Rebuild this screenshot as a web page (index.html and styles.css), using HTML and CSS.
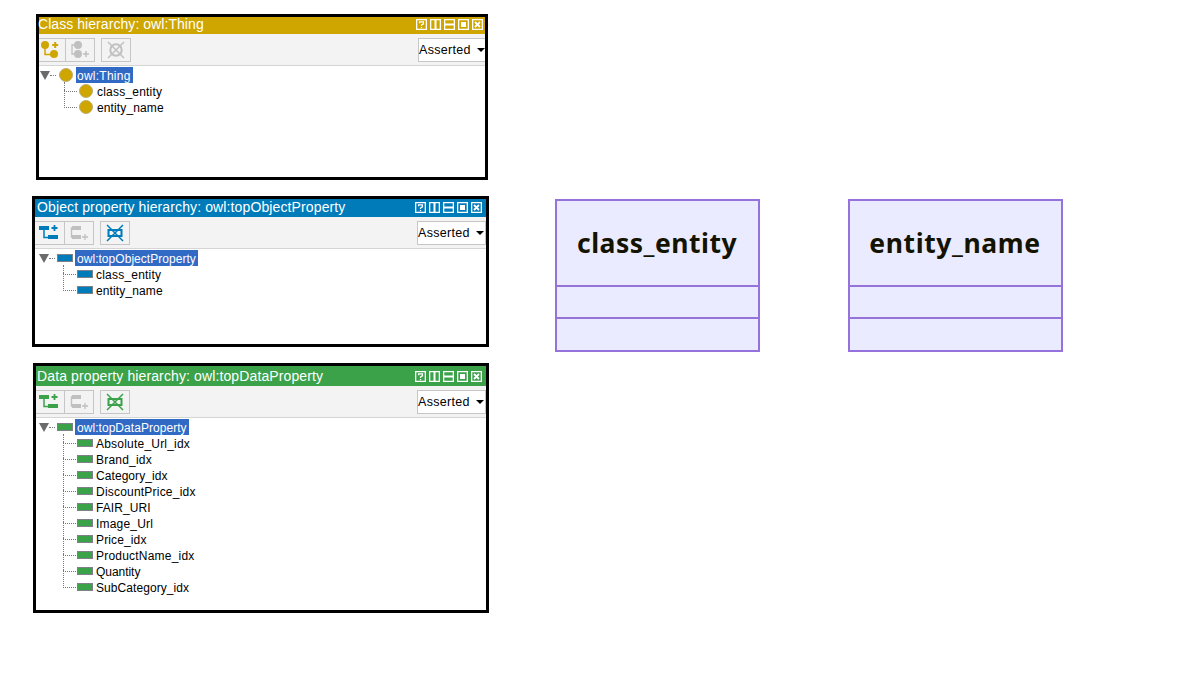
FILE: index.html
```
<!DOCTYPE html>
<html lang="en">
<head>
<meta charset="utf-8">
<title>Ontology hierarchies</title>
<link rel="stylesheet" href="styles.css">
</head>
<body>
<svg class="defs" width="0" height="0">
  <defs>
    <symbol id="win" viewBox="0 0 67 11">
      <g fill="none" stroke="#fff" stroke-width="1.3">
        <path d="M.65.65h9.7v9.7H.65zM14.65.65h9.7v9.7h-9.7zM28.65.65h9.7v9.7h-9.7zM42.65.65h9.7v9.7h-9.7zM56.65.65h9.7v9.7h-9.7z"/>
        <path d="M3.6 4.2V2.8h3.8v2L5.5 6v1M5.5 8v1.3"/>
        <path d="M19.5 1v9M29 5.5h9" stroke-width="2"/>
        <path d="M59 3l5 5M64 3l-5 5" stroke-width="1.8"/>
      </g>
      <path fill="#fff" d="M45 3h5v5h-5z"/>
    </symbol>
    <symbol id="add-child" viewBox="0 0 20 18">
      <path d="M6 6v7.5h5" fill="none" stroke="currentColor" stroke-width="1.5"/>
      <path d="M1 2h10v4H1zM10 11h10v4H10z" fill="currentColor"/>
      <path d="M16.5 1v6M13.5 4h6" stroke="currentColor" stroke-width="1.8"/>
    </symbol>
    <symbol id="add-sib" viewBox="0 0 20 18">
      <path d="M5 4H2.5v9H5" fill="none" stroke="currentColor" stroke-width="1.4"/>
      <path d="M3 2h9v4H3zM3 11h9v4H3z" fill="currentColor"/>
      <path d="M16 10v6M13 13h6" stroke="currentColor" stroke-width="1.3"/>
    </symbol>
    <symbol id="delete" viewBox="0 0 20 18">
      <path d="M3.5 6h13v6h-13z" fill="none" stroke="currentColor" stroke-width="2"/>
      <path d="M2 1l16 16M18 1L2 17" stroke="currentColor" stroke-width="1.5"/>
    </symbol>
    <symbol id="c-add-child" viewBox="0 0 20 18">
      <path d="M5 6v7.5h6" fill="none" stroke="currentColor" stroke-width="1.5"/>
      <circle cx="5" cy="4" r="4" fill="currentColor"/><circle cx="14" cy="13" r="4" fill="currentColor"/>
      <path d="M15.2 1v6M12.2 4h6" stroke="currentColor" stroke-width="2"/>
    </symbol>
    <symbol id="c-add-sib" viewBox="0 0 20 18">
      <path d="M6 4H2v9h4" fill="none" stroke="currentColor" stroke-width="1.3"/>
      <circle cx="8" cy="4" r="4" fill="currentColor"/><circle cx="8" cy="13" r="4" fill="currentColor"/>
      <path d="M16 10v6M13 13h6" stroke="currentColor" stroke-width="1.5"/>
    </symbol>
    <symbol id="c-delete" viewBox="0 0 20 18">
      <circle cx="10" cy="9" r="5.7" fill="none" stroke="currentColor" stroke-width="2"/>
      <path d="M2 1l16 16M18 1L2 17" stroke="currentColor" stroke-width="1.5"/>
    </symbol>
  </defs>
</svg>
<main class="page">
  <div class="panels">
    <section class="panel classes">
      <header class="title"><span class="t1">Class hierarchy: owl:Thing</span><svg class="win"><use href="#win"/></svg></header>
      <div class="toolbar">
        <div class="btn first"><svg class="ico"><use href="#c-add-child"/></svg></div>
        <div class="btn second off"><svg class="ico"><use href="#c-add-sib"/></svg></div>
        <div class="btn third off"><svg class="ico"><use href="#c-delete"/></svg></div>
        <div class="select"><span>Asserted</span><i class="caret"></i></div>
      </div>
      <div class="tree">
        <div class="root"><i class="arrow"></i><i class="dots"></i><i class="mark"></i><span class="sel r1">owl:Thing</span></div>
        <div class="row"><i class="mark"></i><span class="n1">class_entity</span></div>
        <div class="row"><i class="mark"></i><span class="n2">entity_name</span></div>
      </div>
    </section>
    <section class="panel objects">
      <header class="title"><span class="t2">Object property hierarchy: owl:topObjectProperty</span><svg class="win"><use href="#win"/></svg></header>
      <div class="toolbar">
        <div class="btn first"><svg class="ico"><use href="#add-child"/></svg></div>
        <div class="btn second off"><svg class="ico"><use href="#add-sib"/></svg></div>
        <div class="btn third"><svg class="ico"><use href="#delete"/></svg></div>
        <div class="select"><span>Asserted</span><i class="caret"></i></div>
      </div>
      <div class="tree">
        <div class="root"><i class="arrow"></i><i class="dots"></i><i class="mark"></i><span class="sel r2">owl:topObjectProperty</span></div>
        <div class="row"><i class="mark"></i><span class="n1">class_entity</span></div>
        <div class="row"><i class="mark"></i><span class="n2">entity_name</span></div>
      </div>
    </section>
    <section class="panel data">
      <header class="title"><span class="t3">Data property hierarchy: owl:topDataProperty</span><svg class="win"><use href="#win"/></svg></header>
      <div class="toolbar">
        <div class="btn first"><svg class="ico"><use href="#add-child"/></svg></div>
        <div class="btn second off"><svg class="ico"><use href="#add-sib"/></svg></div>
        <div class="btn third"><svg class="ico"><use href="#delete"/></svg></div>
        <div class="select"><span>Asserted</span><i class="caret"></i></div>
      </div>
      <div class="tree">
        <div class="root"><i class="arrow"></i><i class="dots"></i><i class="mark"></i><span class="sel r3">owl:topDataProperty</span></div>
        <div class="row"><i class="mark"></i><span class="n1">Absolute_Url_idx</span></div>
        <div class="row"><i class="mark"></i><span class="n1">Brand_idx</span></div>
        <div class="row"><i class="mark"></i><span class="d3">Category_idx</span></div>
        <div class="row"><i class="mark"></i><span class="n1">DiscountPrice_idx</span></div>
        <div class="row"><i class="mark"></i><span class="d3">FAIR_URI</span></div>
        <div class="row"><i class="mark"></i><span class="d6">Image_Url</span></div>
        <div class="row"><i class="mark"></i><span class="n2">Price_idx</span></div>
        <div class="row"><i class="mark"></i><span class="n1">ProductName_idx</span></div>
        <div class="row"><i class="mark"></i><span class="d9">Quantity</span></div>
        <div class="row"><i class="mark"></i><span class="d3">SubCategory_idx</span></div>
      </div>
    </section>
  </div>
  <div class="diagram">
    <div class="entity e1"><div class="name"><span class="m1">class_entity</span></div><div class="slot"></div><div class="slot"></div></div>
    <div class="entity e2"><div class="name"><span class="m2">entity_name</span></div><div class="slot"></div><div class="slot"></div></div>
  </div>
</main>
</body>
</html>
```
FILE: styles.css
```
* { box-sizing: border-box; }
body { margin: 0; background: #fff; font-family: "Liberation Sans", Arial, sans-serif; color: #000; }
.defs { position: absolute; }
.page { display: flex; width: 1204px; height: 676px; overflow: hidden; }
.panels { width: 489px; display: flex; flex-direction: column; padding-top: 14px; }
.panel { border: 3px solid #000; display: flex; flex-direction: column; --c: #007bba; --rail: 28px; }
.classes { margin-left: 36px; width: 452px; height: 166px; --c: #cfa500; --rail: 25px; }
.objects { margin: 16px 0 0 32px; height: 151px; }
.data { margin: 16px 0 0 33px; height: 250px; --c: #3ba24a; --rail: 27px; }

.title { background: var(--c); color: #fff; height: 18px; flex: none; display: flex; justify-content: space-between; align-items: flex-start; padding: 0 4px 0 2px; font-size: 14px; line-height: 16px; letter-spacing: .12px; white-space: nowrap; }
.title .win { margin-top: 3px; }
.classes .title { height: 17px; padding: 0 2px 0 0; line-height: 15px; letter-spacing: .06px; }
.classes .title .win { margin-top: 2px; }
.t1 { margin-left: -1px; }
.data .title { height: 20px; padding-left: 1px; line-height: 20px; }
.data .title .win { margin-top: 5px; }
.win { width: 67px; height: 11px; flex: none; }

.toolbar { height: 32px; flex: none; background: #f3f3f3; border-bottom: 1px solid #d5d5d5; display: flex; align-items: flex-start; padding-top: 4px; }
.btn { height: 24px; width: 30px; border: 1px solid #c6c6c6; color: var(--c); display: flex; align-items: center; justify-content: center; }
.off { color: #c0c0c0; }
.first { border-left: 0; width: 27px; justify-content: flex-start; padding-left: 1px; }
.objects .first { width: 30px; padding-left: 3px; }
.data .first { width: 29px; padding-left: 2px; }
.second { margin-left: -1px; }
.third { margin-left: 6px; }
.ico { width: 20px; height: 18px; flex: none; }
.select { margin-left: auto; width: 67px; height: 24px; background: #fff; border: 1px solid #c6c6c6; border-right: 0; display: flex; justify-content: space-between; align-items: center; font-size: 12.5px; letter-spacing: .3px; }
.select span { padding-bottom: 1px; }
.objects .select, .data .select { width: 69px; border-right: 1px solid #c6c6c6; padding-right: 1px; }
.caret { border: 4px solid transparent; border-top: 4px solid #000; border-bottom: 0; }

.tree { padding-top: 1px; font-size: 12px; line-height: 16px; }
.root, .row { display: flex; align-items: center; height: 16px; white-space: nowrap; }
.root { padding-left: calc(var(--rail) - 24px); }
.row span { padding-top: 2px; }
.arrow { border: 5px solid transparent; border-top: 9px solid #6b6b6b; border-bottom: 0; }
.dots { width: 6px; border-top: 1px dotted #777; margin-right: 2px; }
.mark { width: 16px; height: 8px; border: 1px solid #7c8288; background: var(--c); flex: none; margin-right: 3px; }
.root .mark { margin-right: 2px; }
.classes .mark { width: 14px; height: 14px; border: 1px solid #bcae75; border-radius: 50%; margin-right: 4px; }
.classes .root .mark { margin-left: 1px; margin-right: 3px; }
.sel { background: #316ac5; color: #fff; padding: 0 1px; height: 16px; line-height: 18px; }
.row { margin-left: var(--rail); }
.row::before { content: ""; width: 12px; height: 17px; margin: -16px 2px 0 0; border-left: 1px dotted #777; border-bottom: 1px dotted #777; flex: none; }
.root + .row::before { height: 9px; margin-top: -8px; }
.objects .row::before, .data .row::before { margin-right: 1px; }
.n1 { letter-spacing: .21px; }
.n2 { letter-spacing: .13px; }
.d3 { letter-spacing: .07px; }
.d6 { letter-spacing: .2px; }
.d9 { letter-spacing: -.04px; }
.sel.r1 { width: 57px; letter-spacing: .25px; }
.sel.r2 { width: 123px; letter-spacing: .04px; }
.sel.r3 { width: 114px; letter-spacing: .05px; }
.objects .sel, .data .sel { padding-left: 2px; }

.diagram { display: flex; align-items: flex-start; gap: 88px; padding: 199px 0 0 65.5px; }
.entity { height: 153px; background: #ebebff; border: 2px solid #9673dc; display: flex; flex-direction: column; color: #131300; font: 700 26.5px "Noto Sans", "Open Sans", sans-serif; }
.e1 { width: 205px; } .e2 { width: 215px; }
.name { height: 84px; flex: none; display: flex; align-items: center; justify-content: center; padding-bottom: 1px; }
.m1 { letter-spacing: .5px; }
.m2 { letter-spacing: .6px; }
.slot { height: 32px; flex: none; border-top: 2px solid #9673dc; }
```
